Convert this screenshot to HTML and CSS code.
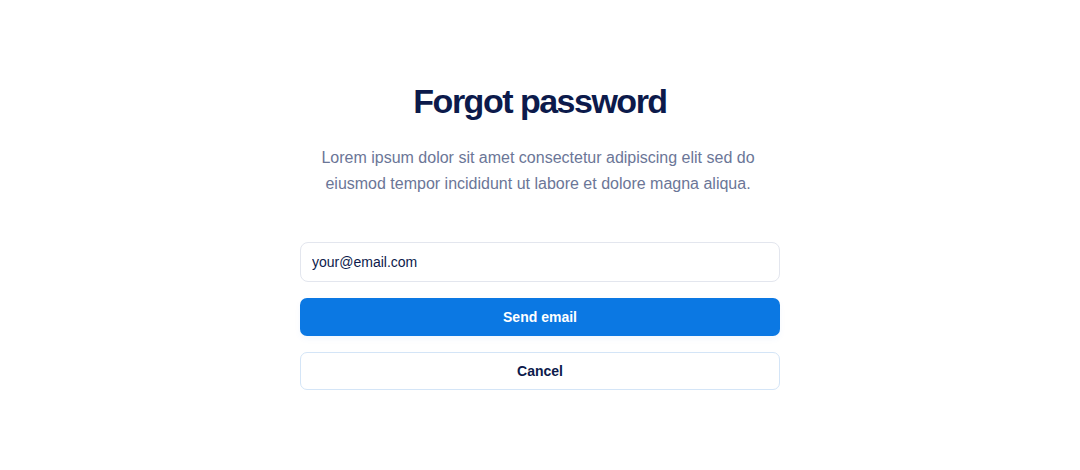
FILE: index.html
```html
<!DOCTYPE html>
<html>
<head>
<meta charset="utf-8">
<link rel="stylesheet" href="styles.css">
</head>
<body>
<main class="page">
  <section class="card">
    <h1 class="title">Forgot password</h1>
    <p class="lead">Lorem ipsum dolor sit amet consectetur adipiscing elit sed do eiusmod tempor incididunt ut labore et dolore magna aliqua.</p>
    <form class="form">
      <input class="field" type="email" value="your@email.com">
      <button class="btn btn-primary" type="button">Send email</button>
      <button class="btn btn-secondary" type="button">Cancel</button>
    </form>
  </section>
</main>
</body>
</html>
```
FILE: styles.css
```css
* { box-sizing: border-box; }
html, body { margin: 0; padding: 0; background: #ffffff; }
body { font-family: "Liberation Sans", Arial, sans-serif; width: 1080px; height: 470px; overflow: hidden; }
.page { display: flex; justify-content: center; padding-top: 81px; }
.card { width: 480px; display: flex; flex-direction: column; align-items: stretch; }
.title {
  margin: 0;
  text-align: center;
  font-size: 34px;
  line-height: 40px;
  font-weight: 700;
  letter-spacing: -1.5px;
  color: #0c1a4b;
}
.lead {
  margin: 24px 0 0;
  text-align: center;
  font-size: 16px;
  line-height: 26px;
  color: #6b7697;
  padding: 0 12px 0 8px;
}
.form { margin-top: 45px; display: flex; flex-direction: column; gap: 16px; }
.field {
  height: 40px;
  border: 1px solid #e3e6ee;
  border-radius: 8px;
  padding: 0 11px;
  font: 14px "Liberation Sans", Arial, sans-serif;
  color: #0c1a4b;
  outline: none;
}
.btn {
  height: 38px;
  border-radius: 7px;
  font: 700 14px "Liberation Sans", Arial, sans-serif;
  cursor: pointer;
}
.btn-primary { background: #0b78e3; color: #ffffff; border: none; box-shadow: 0 3px 6px rgba(11,120,227,0.05); }
.btn-secondary { background: #ffffff; color: #0c1a4b; border: 1px solid #d4e5f7; }
```
